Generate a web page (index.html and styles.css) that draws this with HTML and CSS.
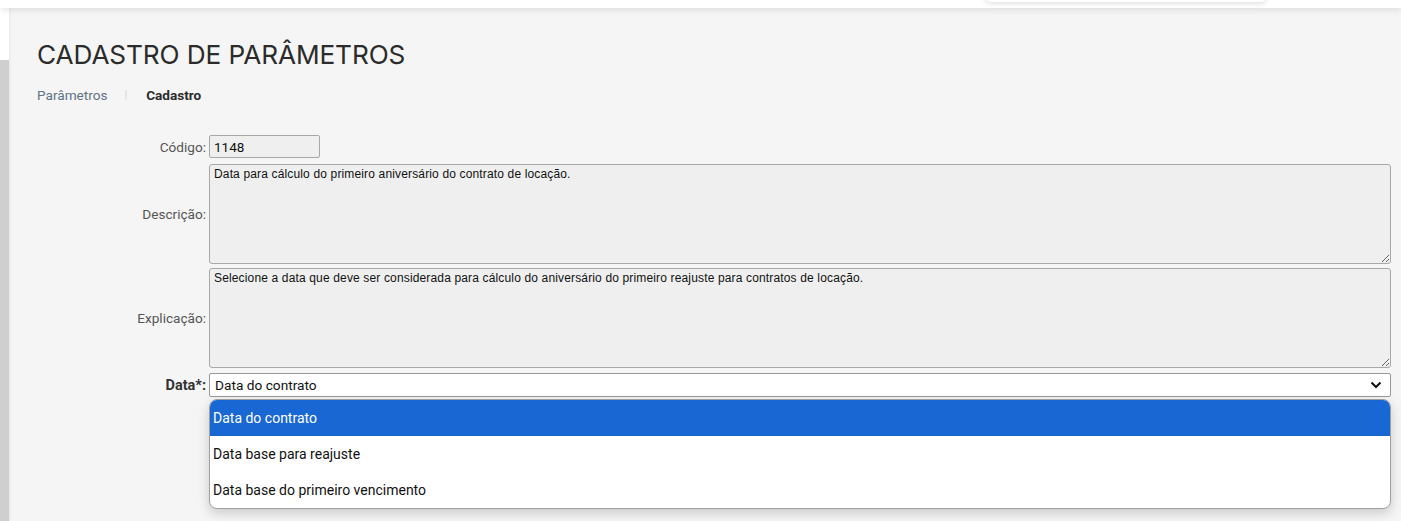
FILE: index.html
```html
<!DOCTYPE html>
<html lang="pt-BR">
<head>
<meta charset="utf-8">
<title>Cadastro de Parâmetros</title>
<link rel="stylesheet" href="styles.css">
</head>
<body>
<header class="topbar">
  <div class="topbar-pop"></div>
</header>
<div class="layout">
  <aside class="sidebar"><div class="sidebar-top"></div></aside>
  <main class="content">
    <h1 class="title">CADASTRO DE PARÂMETROS</h1>
    <nav class="breadcrumb">
      <span class="crumb">Parâmetros</span>
      <span class="crumb-sep">|</span>
      <span class="crumb crumb-current">Cadastro</span>
    </nav>
    <form class="form">
      <div class="row row-code">
        <label class="label">Código:</label>
        <div class="field"><input class="input input-code" type="text" value="1148" disabled></div>
      </div>
      <div class="row row-area">
        <label class="label">Descrição:</label>
        <div class="field"><textarea class="textarea" disabled>Data para cálculo do primeiro aniversário do contrato de locação.</textarea></div>
      </div>
      <div class="row row-area row-area2">
        <label class="label">Explicação:</label>
        <div class="field"><textarea class="textarea" disabled>Selecione a data que deve ser considerada para cálculo do aniversário do primeiro reajuste para contratos de locação.</textarea></div>
      </div>
      <div class="row row-select">
        <label class="label label-bold">Data*:</label>
        <div class="field field-select">
          <div class="select">
            <span class="select-value">Data do contrato</span>
            <svg class="chevron" width="12" height="8" viewBox="0 0 12 8"><path d="M1.5 1.5 L6 6 L10.5 1.5" fill="none" stroke="#111" stroke-width="2"/></svg>
          </div>
          <ul class="options">
            <li class="option option-selected">Data do contrato</li>
            <li class="option">Data base para reajuste</li>
            <li class="option">Data base do primeiro vencimento</li>
          </ul>
        </div>
      </div>
    </form>
  </main>
</div>
</body>
</html>
```
FILE: styles.css
```css
* { box-sizing: border-box; }
html, body { margin: 0; padding: 0; height: 100%; }
body {
  background: #f5f5f5;
  font-family: Roboto, "Liberation Sans", Arial, sans-serif;
  overflow: hidden;
}
.topbar {
  position: relative;
  height: 8px;
  background: #fff;
  box-shadow: 0 2px 6px rgba(0,0,0,0.10);
  z-index: 3;
}
.topbar-pop {
  position: absolute;
  left: 985px;
  width: 282px;
  top: -10px;
  height: 12px;
  background: #fff;
  border-radius: 0 0 6px 6px;
  box-shadow: 0 2px 5px rgba(0,0,0,0.12);
}
.layout {
  display: flex;
  height: calc(100% - 8px);
}
.sidebar {
  width: 9px;
  flex: none;
  background: #cfcfcf;
  box-shadow: 1px 0 3px rgba(0,0,0,0.06);
  z-index: 2;
}
.sidebar-top {
  height: 52px;
  background: #fff;
}
.content {
  flex: 1;
  padding: 32px 10px 0 28px;
  position: relative;
}
.title {
  margin: 0;
  font-family: Inter, "Open Sans", sans-serif;
  font-weight: 400;
  font-size: 26.2px;
  line-height: 30px;
  color: #2b2b2b;
  letter-spacing: -0.1px;
}
.breadcrumb {
  margin-top: 17px;
  display: flex;
  align-items: center;
  font-size: 13.6px;
  line-height: 16px;
}
.crumb { color: #5f7284; }
.crumb-sep { color: #d0d0d0; margin: 0 19px 0 17px; font-size: 11px; }
.crumb-current { color: #2b2b2b; font-weight: 700; }
.form {
  margin-top: 32px;
  display: flex;
  flex-direction: column;
}
.row {
  display: grid;
  grid-template-columns: 169px 1fr;
  column-gap: 3px;
  align-items: center;
}
.label {
  text-align: right;
  font-size: 13.6px;
  color: #555;
}
.label-bold { font-weight: 700; color: #333; font-size: 14.5px; }
.field { position: relative; }
.input {
  display: block;
  font-family: Roboto, sans-serif;
  font-size: 13.5px;
  color: #111;
  background: #efefef;
  border: 1px solid #a8a8a8;
  border-radius: 2px;
  height: 23px;
  padding: 0 4px;
}
.input-code { width: 111px; }
.row-area { margin-top: 6px; }
.row-area2 { margin-top: 4px; }
.textarea {
  display: block;
  width: 100%;
  height: 100px;
  resize: both;
  font-family: "Liberation Sans", Arial, sans-serif;
  font-size: 12px;
  line-height: 14px;
  letter-spacing: 0.15px;
  color: #111;
  background: #efefef;
  border: 1px solid #a8a8a8;
  border-radius: 3px;
  padding: 2px 4px;
}
.row-select { margin-top: 5px; }
.select {
  height: 24px;
  background: #fff;
  border: 1px solid #9a9a9a;
  border-radius: 2px;
  display: flex;
  align-items: center;
  justify-content: space-between;
  padding: 0 8px 0 5px;
  font-size: 13.7px;
  color: #111;
}
.chevron { display: block; }
.options {
  position: absolute;
  left: 0;
  right: 0;
  top: 26px;
  margin: 0;
  padding: 0;
  list-style: none;
  background: #fff;
  border: 1px solid #a0a0a0;
  border-radius: 8px;
  overflow: hidden;
  box-shadow: 0 4px 12px rgba(0,0,0,0.18);
  z-index: 5;
}
.option {
  height: 36px;
  line-height: 36px;
  padding-left: 3px;
  font-size: 14px;
  color: #111;
}
.option-selected {
  background: #1967d2;
  color: #fff;
}
```
